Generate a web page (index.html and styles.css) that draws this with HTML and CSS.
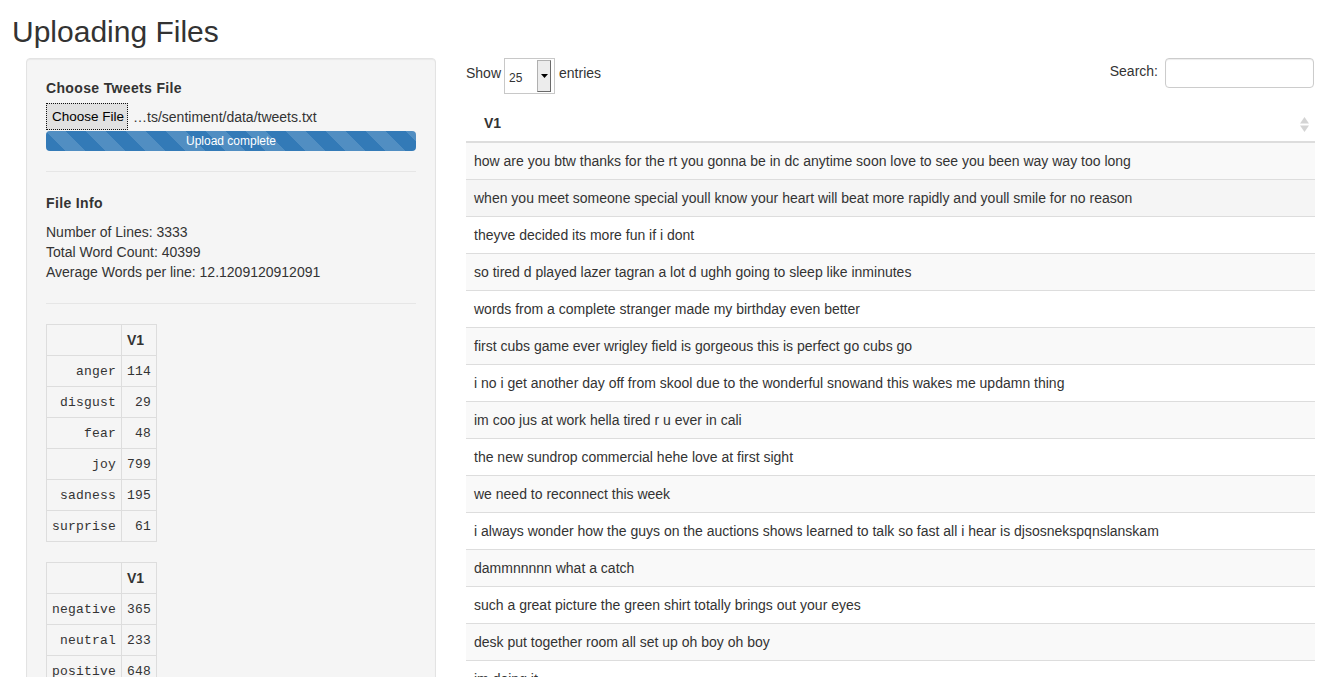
FILE: index.html
```html
<!DOCTYPE html>
<html lang="en">
<head>
<meta charset="utf-8">
<title>Uploading Files</title>
<link rel="stylesheet" href="styles.css">
</head>
<body>
<div class="page">
  <h2 class="title">Uploading Files</h2>
  <div class="layout">
    <aside class="sidebar">
      <div class="well">
        <label class="control-label">Choose Tweets File</label>
        <div class="file-row">
          <span class="file-btn">Choose File</span>
          <span class="file-name">…ts/sentiment/data/tweets.txt</span>
        </div>
        <div class="progress"><div class="progress-bar">Upload complete</div></div>
        <hr class="divider first">
        <h4 class="section">File Info</h4>
        <div class="info">
          <div>Number of Lines: 3333</div>
          <div>Total Word Count: 40399</div>
          <div>Average Words per line: 12.1209120912091</div>
        </div>
        <hr class="divider second">
        <table class="stat">
          <thead><tr><th></th><th>V1</th></tr></thead>
          <tbody>
            <tr><td>anger</td><td>114</td></tr>
            <tr><td>disgust</td><td>29</td></tr>
            <tr><td>fear</td><td>48</td></tr>
            <tr><td>joy</td><td>799</td></tr>
            <tr><td>sadness</td><td>195</td></tr>
            <tr><td>surprise</td><td>61</td></tr>
          </tbody>
        </table>
        <table class="stat">
          <thead><tr><th></th><th>V1</th></tr></thead>
          <tbody>
            <tr><td>negative</td><td>365</td></tr>
            <tr><td>neutral</td><td>233</td></tr>
            <tr><td>positive</td><td>648</td></tr>
          </tbody>
        </table>
      </div>
    </aside>
    <main class="main">
      <div class="dt-top">
        <div class="dt-length">
          <span class="dt-text">Show</span>
          <span class="select">
            <span class="select-value">25</span>
            <span class="select-btn"><svg width="7" height="4" viewBox="0 0 7 4"><path d="M0 0H7L3.5 4Z" fill="#000"/></svg></span>
          </span>
          <span class="dt-text">entries</span>
        </div>
        <div class="dt-search">
          <span class="dt-text">Search:</span>
          <span class="search-input"></span>
        </div>
      </div>
      <table class="data">
        <thead>
          <tr><th><div class="th-inner"><span>V1</span>
            <svg class="sort" width="9" height="15" viewBox="0 0 9 15"><path d="M4.5 0L9 6.5H0Z" fill="#d4d4d4"/><path d="M4.5 15L9 8.5H0Z" fill="#d4d4d4"/></svg>
          </div></th></tr>
        </thead>
        <tbody>
          <tr class="odd"><td>how are you btw thanks for the rt you gonna be in dc anytime soon love to see you been way way too long</td></tr>
          <tr class="hover"><td>when you meet someone special youll know your heart will beat more rapidly and youll smile for no reason</td></tr>
          <tr><td>theyve decided its more fun if i dont</td></tr>
          <tr class="odd"><td>so tired d played lazer tagran a lot d ughh going to sleep like inminutes</td></tr>
          <tr><td>words from a complete stranger made my birthday even better</td></tr>
          <tr class="odd"><td>first cubs game ever wrigley field is gorgeous this is perfect go cubs go</td></tr>
          <tr><td>i no i get another day off from skool due to the wonderful snowand this wakes me updamn thing</td></tr>
          <tr class="odd"><td>im coo jus at work hella tired r u ever in cali</td></tr>
          <tr><td>the new sundrop commercial hehe love at first sight</td></tr>
          <tr class="odd"><td>we need to reconnect this week</td></tr>
          <tr><td>i always wonder how the guys on the auctions shows learned to talk so fast all i hear is djsosnekspqnslanskam</td></tr>
          <tr class="odd"><td>dammnnnnn what a catch</td></tr>
          <tr><td>such a great picture the green shirt totally brings out your eyes</td></tr>
          <tr class="odd"><td>desk put together room all set up oh boy oh boy</td></tr>
          <tr><td>im doing it</td></tr>
        </tbody>
      </table>
    </main>
  </div>
</div>
</body>
</html>
```

FILE: styles.css
```css
html, body {
  margin: 0;
  padding: 0;
  background: #fff;
}
body {
  font-family: "Liberation Sans", Arial, Helvetica, sans-serif;
  font-size: 14px;
  line-height: 20px;
  color: #333;
}
.page {
  width: 1343px;
}
.title {
  margin: 0;
  padding: 15px 0 0 12px;
  font-size: 30px;
  line-height: 33px;
  font-weight: normal;
  color: #333;
}
.layout {
  display: flex;
  align-items: flex-start;
  gap: 30px;
  margin-top: 10px;
  padding-left: 26px;
}
.sidebar {
  width: 410px;
  flex: none;
}
.well {
  background: #f5f5f5;
  border: 1px solid #e3e3e3;
  border-radius: 4px;
  padding: 19px;
  box-shadow: inset 0 1px 1px rgba(0,0,0,0.05);
}
.control-label {
  display: block;
  font-weight: bold;
  letter-spacing: 0.35px;
  margin-bottom: 5px;
}
.file-row {
  display: flex;
  align-items: center;
  height: 27px;
  margin: 3px 0 1px;
}
.file-btn {
  box-sizing: border-box;
  height: 27px;
  display: flex;
  align-items: center;
  padding: 0 3px 0 5px;
  font-size: 13.5px;
  border: 1px dotted #111;
  background: #e1e1e1;
  color: #000;
}
.file-name {
  margin-left: 5px;
  color: #333;
}
.progress {
  height: 20px;
  border-radius: 4px;
  overflow: hidden;
  background: #f5f5f5;
}
.progress-bar {
  height: 20px;
  line-height: 20px;
  font-size: 12px;
  color: #fff;
  text-align: center;
  background-color: #337ab7;
  background-image: linear-gradient(45deg, rgba(255,255,255,.15) 25%, transparent 25%, transparent 50%, rgba(255,255,255,.15) 50%, rgba(255,255,255,.15) 75%, transparent 75%, transparent);
  background-size: 40px 40px;
}
.divider {
  border: 0;
  border-top: 1px solid #e6e6e6;
  height: 0;
  margin: 20px 0;
}
.divider.first {
  margin-bottom: 21px;
}
.divider.second {
  margin-top: 21px;
}
.section {
  margin: 0 0 9px;
  font-size: 14px;
  line-height: 20px;
  font-weight: bold;
  letter-spacing: 0.35px;
}
.stat {
  border-collapse: collapse;
  margin-bottom: 20px;
}
.stat th, .stat td {
  border: 1px solid #ddd;
  padding: 5px;
  line-height: 20px;
}
.stat th {
  text-align: left;
  font-weight: bold;
  font-size: 14px;
}
.stat td {
  font-family: "Liberation Mono", "Courier New", monospace;
  font-size: 13px;
  letter-spacing: 0.2px;
  text-align: right;
  padding-top: 6px;
  padding-bottom: 4px;
}
.main {
  width: 849px;
  flex: none;
}
.dt-top {
  display: flex;
  justify-content: space-between;
  align-items: flex-start;
  height: 36px;
}
.dt-length, .dt-search {
  display: flex;
  align-items: flex-start;
}
.dt-length .dt-text {
  margin-top: 5px;
}
.dt-search .dt-text {
  margin-top: 3px;
}
.select {
  box-sizing: border-box;
  width: 51px;
  height: 36px;
  margin: 0 4px 0 3px;
  border: 1px solid #c8c8c8;
  background: #fff;
  display: flex;
  align-items: center;
}
.select-value {
  font-size: 12px;
  margin-left: 4px;
  margin-top: 3px;
  color: #333;
}
.select-btn {
  box-sizing: border-box;
  width: 14px;
  height: 32px;
  margin: 0 3px 0 auto;
  border: 1px solid;
  border-color: #b0b0b0 #6a6a6a #6a6a6a #b0b0b0;
  background: #ececec;
  display: flex;
  align-items: center;
  justify-content: center;
}
.search-input {
  box-sizing: border-box;
  width: 149px;
  height: 30px;
  margin: 0 1px 0 7px;
  border: 1px solid #ccc;
  border-radius: 4px;
  background: #fff;
  box-shadow: inset 0 1px 1px rgba(0,0,0,.075);
}
.data {
  width: 100%;
  margin-top: 10px;
  border-collapse: collapse;
}
.data th {
  text-align: left;
  font-weight: bold;
  padding: 9px 0 8px 18px;
  line-height: 20px;
  border-bottom: 2px solid #ddd;
}
.th-inner {
  display: flex;
  justify-content: space-between;
  align-items: center;
}
.sort {
  margin-right: 6px;
  margin-top: 2px;
}
.data td {
  padding: 8px;
  line-height: 20px;
  border-top: 1px solid #ddd;
  color: #333;
}
.data tr.odd td {
  background: #f9f9f9;
}
.data tr.hover td {
  background: #f5f5f5;
}
```
